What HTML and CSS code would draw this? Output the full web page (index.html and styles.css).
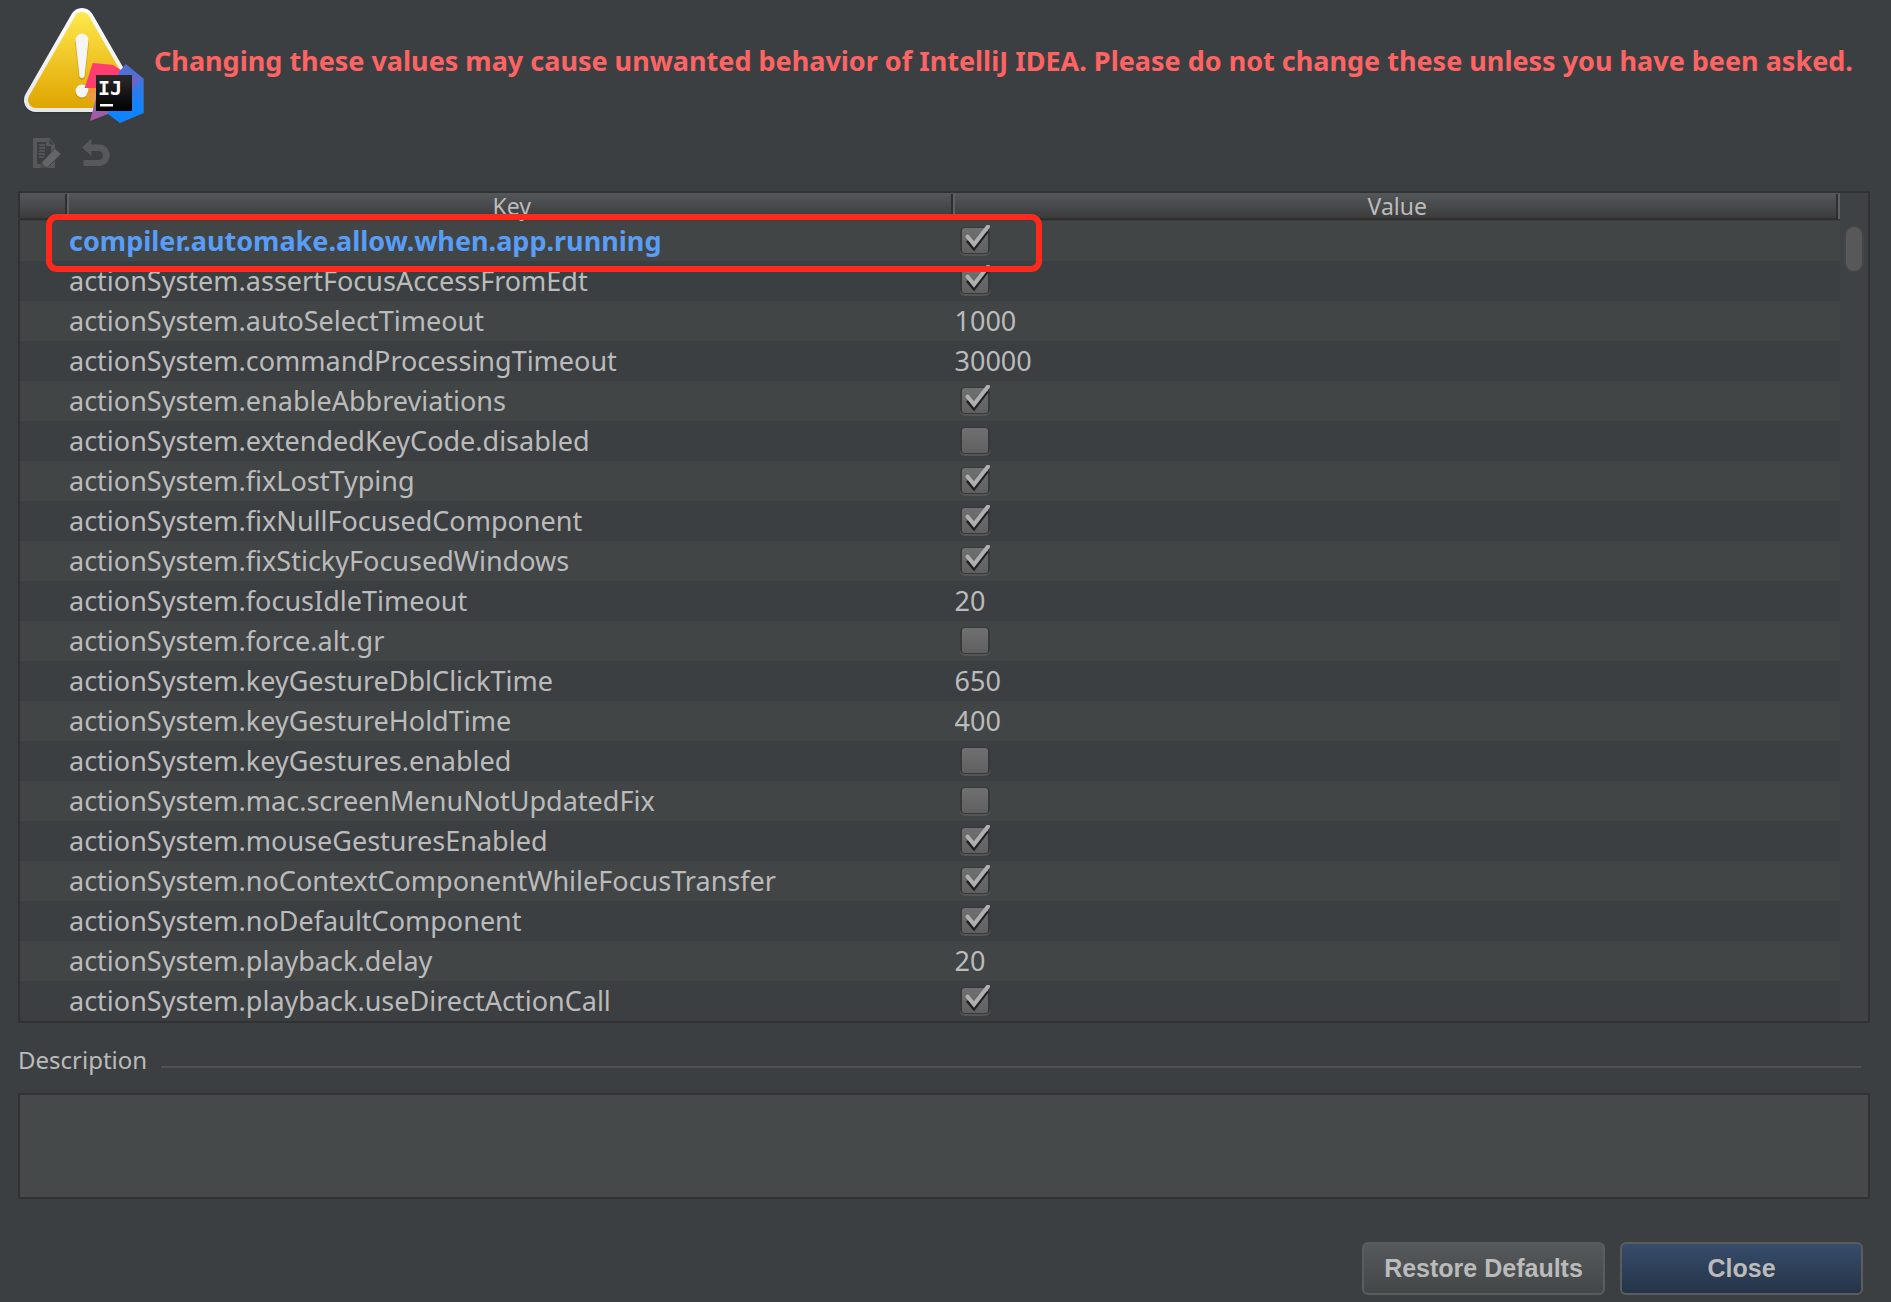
FILE: index.html
```html
<!DOCTYPE html>
<html lang="en">
<head>
<meta charset="utf-8">
<meta name="viewport" content="width=device-width, initial-scale=1">
<title>Registry</title>
<link rel="stylesheet" href="styles.css">
</head>
<body>
<main class="dialog">
  <header class="warning">
    <svg class="warning-icon" viewBox="22 0 124 122" aria-hidden="true">
      <defs>
        <linearGradient id="yellow" gradientUnits="userSpaceOnUse" x1="0" y1="12" x2="0" y2="108"><stop offset="0" stop-color="#ffe84c"/><stop offset="1" stop-color="#dfa400"/></linearGradient>
        <linearGradient id="white" gradientUnits="userSpaceOnUse" x1="0" y1="8" x2="0" y2="112"><stop offset="0" stop-color="#ffffff"/><stop offset="1" stop-color="#e6e6e6"/></linearGradient>
        <linearGradient id="blue" x1="0" y1="0" x2="0" y2="1"><stop offset="0" stop-color="#5b6bd0"/><stop offset=".7" stop-color="#1483fa"/><stop offset="1" stop-color="#0b84ff"/></linearGradient>
        <linearGradient id="purple" x1="1" y1="0" x2="0" y2="1"><stop offset="0" stop-color="#7a6cc4"/><stop offset="1" stop-color="#b0559f"/></linearGradient>
        <linearGradient id="orange" x1="0" y1="0" x2="0" y2="1"><stop offset="0" stop-color="#f9902c"/><stop offset="1" stop-color="#e8a05a"/></linearGradient>
        <linearGradient id="black" x1="0" y1="0" x2="0" y2="1"><stop offset="0" stop-color="#2b2b2b"/><stop offset="1" stop-color="#000000"/></linearGradient>
      </defs>
      <path d="M82 21 36 101H128Z" fill="#2d2f30" stroke="#2d2f30" stroke-width="25" stroke-linejoin="round" opacity=".6"/>
      <path d="M82 20 36 100H128Z" fill="url(#white)" stroke="url(#white)" stroke-width="24" stroke-linejoin="round"/>
      <path d="M82 20 36 100H128Z" fill="url(#yellow)" stroke="url(#yellow)" stroke-width="16" stroke-linejoin="round"/>
      <g fill="#c08a00" opacity=".6"><path d="M75 42a7 7 0 0 1 14 0L85 78q-3 4-6 0Z"/><circle cx="82" cy="92" r="7"/></g>
      <g fill="#f5f5f5"><path d="M75.500 40a6.500 6.500 0 0 1 13 0L84.500 76.500q-2.500 3-5 0Z"/><circle cx="82" cy="91" r="6.500"/></g>
      <path d="M86 96 90 87h8v18Z" fill="url(#orange)"/>
      <path d="M96 98 90 121 108 114 114 104Z" fill="url(#purple)"/>
      <path d="M92.700 63 113 65 124 72V88H84.700Z" fill="#ff3d6e"/>
      <path d="M125.700 64 143.700 78.700V113L120 123 108 114 119 72Z" fill="url(#blue)"/>
      <path d="M131 92 141 78 131 74Z" fill="#6a66c8"/>
      <path d="M96 75h36v36H96Z" fill="url(#black)"/>
      <text class="logo-text" x="98" y="95">IJ</text>
      <path d="M100 104h13v2.500h-13Z" fill="#fff"/>
    </svg>
    <h1 class="warning-text">Changing these values may cause unwanted behavior of IntelliJ IDEA. Please do not change these unless you have been asked.</h1>
  </header>

  <div class="toolbar">
    <button class="tool" type="button" aria-label="Edit value" disabled>
      <svg viewBox="0 0 30 32" aria-hidden="true">
        <path d="M1 1H17L23 8V31H1ZM5 5V27H19V9H14V5Z" fill="#575859" fill-rule="evenodd"/>
        <path d="M7 8h6M7 11h6M7 14h6M7 17h6M7 20h5" stroke="#5b5c5d" stroke-width="1.300"/>
        <path d="M17 1 23 8H17Z" fill="#3c3f41" stroke="#575859"/>
        <path d="M23 11.500 29 17 16 30 9 31 10 25Z" fill="#646566" stroke="#444648"/>
        <path d="M10 26l4 4-5 1Z" fill="#4b4c4d"/>
      </svg>
    </button>
    <button class="tool" type="button" aria-label="Revert to default" disabled>
      <svg viewBox="0 0 30 32" aria-hidden="true">
        <path d="M0 10.500 9.500 1.500V7.500H17a10.500 10.500 0 0 1 0 21.500H1.500V23H16.500a4.500 4.500 0 0 0 0-9H9.500V19Z" fill="#575859"/>
      </svg>
    </button>
  </div>

  <section class="panel" aria-label="Registry keys">
    <table class="registry">
      <colgroup><col class="col-mark"><col><col></colgroup>
      <thead>
        <tr><th scope="col"></th><th scope="col">Key</th><th scope="col">Value</th></tr>
      </thead>
      <tbody>
        <tr class="changed"><td></td><td><label for="k1">compiler.automake.allow.when.app.running</label></td><td><input class="check" id="k1" type="checkbox" checked></td></tr>
        <tr><td></td><td><label for="k2">actionSystem.assertFocusAccessFromEdt</label></td><td><input class="check" id="k2" type="checkbox" checked></td></tr>
        <tr><td></td><td>actionSystem.autoSelectTimeout</td><td>1000</td></tr>
        <tr><td></td><td>actionSystem.commandProcessingTimeout</td><td>30000</td></tr>
        <tr><td></td><td><label for="k5">actionSystem.enableAbbreviations</label></td><td><input class="check" id="k5" type="checkbox" checked></td></tr>
        <tr><td></td><td><label for="k6">actionSystem.extendedKeyCode.disabled</label></td><td><input class="check" id="k6" type="checkbox"></td></tr>
        <tr><td></td><td><label for="k7">actionSystem.fixLostTyping</label></td><td><input class="check" id="k7" type="checkbox" checked></td></tr>
        <tr><td></td><td><label for="k8">actionSystem.fixNullFocusedComponent</label></td><td><input class="check" id="k8" type="checkbox" checked></td></tr>
        <tr><td></td><td><label for="k9">actionSystem.fixStickyFocusedWindows</label></td><td><input class="check" id="k9" type="checkbox" checked></td></tr>
        <tr><td></td><td>actionSystem.focusIdleTimeout</td><td>20</td></tr>
        <tr><td></td><td><label for="k11">actionSystem.force.alt.gr</label></td><td><input class="check" id="k11" type="checkbox"></td></tr>
        <tr><td></td><td>actionSystem.keyGestureDblClickTime</td><td>650</td></tr>
        <tr><td></td><td>actionSystem.keyGestureHoldTime</td><td>400</td></tr>
        <tr><td></td><td><label for="k14">actionSystem.keyGestures.enabled</label></td><td><input class="check" id="k14" type="checkbox"></td></tr>
        <tr><td></td><td><label for="k15">actionSystem.mac.screenMenuNotUpdatedFix</label></td><td><input class="check" id="k15" type="checkbox"></td></tr>
        <tr><td></td><td><label for="k16">actionSystem.mouseGesturesEnabled</label></td><td><input class="check" id="k16" type="checkbox" checked></td></tr>
        <tr><td></td><td><label for="k17">actionSystem.noContextComponentWhileFocusTransfer</label></td><td><input class="check" id="k17" type="checkbox" checked></td></tr>
        <tr><td></td><td><label for="k18">actionSystem.noDefaultComponent</label></td><td><input class="check" id="k18" type="checkbox" checked></td></tr>
        <tr><td></td><td>actionSystem.playback.delay</td><td>20</td></tr>
        <tr><td></td><td><label for="k20">actionSystem.playback.useDirectActionCall</label></td><td><input class="check" id="k20" type="checkbox" checked></td></tr>
      </tbody>
    </table>
    <div class="scroll-track"><div class="scroll-thumb"></div></div>
    <div class="highlight"></div>
  </section>

  <div class="section-title">
    <label for="description">Description</label>
    <span class="rule"></span>
  </div>
  <textarea class="description" id="description" readonly></textarea>

  <footer class="actions">
    <button class="button" type="button">Restore Defaults</button>
    <button class="button button-primary" type="button">Close</button>
  </footer>
</main>
</body>
</html>
```
FILE: styles.css
```css
* {
  box-sizing: border-box;
}

body {
  margin: 0;
  background: #3c3f41;
  color: #bbbbbb;
  font-family: "Noto Sans", "Open Sans", sans-serif;
  font-size: 27px;
  line-height: 40px;
}

.dialog {
  display: flex;
  flex-direction: column;
  padding: 0 21px 0 18px;
}

.warning {
  display: flex;
  align-items: center;
  gap: 8px;
  padding-left: 4px;
}

.warning-icon {
  flex: none;
  width: 124px;
  height: 122px;
  overflow: visible;
}

.logo-text {
  fill: #ffffff;
  font: bold 20px "DejaVu Sans Mono", monospace;
}

.warning-text {
  margin: 0;
  color: #ff6464;
  font-size: 27px;
  font-weight: 700;
}

.toolbar {
  display: flex;
  gap: 20px;
  margin: 15px 0 22px;
  padding-left: 14px;
}

.tool {
  width: 30px;
  height: 32px;
  padding: 0;
  border: 0;
  background: none;
}

.tool svg {
  display: block;
  width: 30px;
  height: 32px;
}

.panel {
  position: relative;
  display: flex;
  border: 2px solid #323232;
}

.registry {
  flex: 1;
  width: 0;
  table-layout: fixed;
  border-collapse: collapse;
}

.col-mark {
  width: 49px;
}

.registry th {
  height: 28px;
  padding: 0 0 2px;
  background:
    linear-gradient(#2d2e2f, #2d2e2f) right 2px top 1px / 2px 25px no-repeat,
    linear-gradient(#5e6162, #5e6162) right 0 top 1px / 2px 25px no-repeat,
    linear-gradient(#53585a 0, #3c3b3c 25px, #2f2f2f 25px, #2f2f2f 27px, #3c3d3e 27px);
  font-size: 23px;
  font-weight: 400;
  line-height: 26px;
}

.registry td {
  height: 40px;
  padding: 0;
  white-space: nowrap;
}

.registry tbody tr:nth-child(odd) {
  background: #414546;
}

.changed {
  color: #589df6;
  font-weight: 700;
}

.check {
  display: block;
  width: 32px;
  height: 32px;
  margin: 0 0 0 5px;
  appearance: none;
  background: url("data:image/svg+xml,%3Csvg xmlns='http://www.w3.org/2000/svg' viewBox='0 0 32 32'%3E%3Cdefs%3E%3ClinearGradient id='g' x2='0' y2='1'%3E%3Cstop stop-color='%23707070'/%3E%3Cstop offset='1' stop-color='%23606060'/%3E%3C/linearGradient%3E%3C/defs%3E%3Crect x='0' y='5' width='30' height='26' rx='5' fill='%23535556'/%3E%3Crect x='0' y='2' width='30' height='27' rx='5' fill='%23373839'/%3E%3Crect x='2' y='3' width='26' height='25' rx='3' fill='url(%23g)'/%3E%3C/svg%3E") no-repeat;
}

.check:checked {
  background-image: url("data:image/svg+xml,%3Csvg xmlns='http://www.w3.org/2000/svg' viewBox='0 0 32 32'%3E%3Cdefs%3E%3ClinearGradient id='g' x2='0' y2='1'%3E%3Cstop stop-color='%23707070'/%3E%3Cstop offset='1' stop-color='%23606060'/%3E%3C/linearGradient%3E%3C/defs%3E%3Crect x='0' y='5' width='30' height='26' rx='5' fill='%23535556'/%3E%3Crect x='0' y='2' width='30' height='27' rx='5' fill='%23373839'/%3E%3Crect x='2' y='3' width='26' height='25' rx='3' fill='url(%23g)'/%3E%3Cg fill='none' stroke-width='4'%3E%3Cpath d='M7.500 15.500 14 23 27 6' stroke='%231e1e1e'/%3E%3Cpath d='M7.500 11.500 14 19.500 28 1.500' stroke='%23b0b0b0' stroke-linecap='round'/%3E%3C/g%3E%3C/svg%3E");
}

.scroll-track {
  width: 28px;
  padding: 34px 6px 0;
  background: #3f4244;
}

.scroll-thumb {
  height: 44px;
  border-radius: 8px;
  background: #585859;
  box-shadow: 0 0 0 2px #434546;
}

.highlight {
  position: absolute;
  top: 21px;
  left: 26px;
  width: calc(50% + 72px);
  height: 58px;
  border: 6px solid #ff2a1c;
  border-radius: 11px;
  pointer-events: none;
}

.section-title {
  display: flex;
  align-items: flex-end;
  gap: 14px;
  margin: 21px 9px 17px 0;
  font-size: 24px;
  line-height: 32px;
}

.rule {
  flex: 1;
  height: 2px;
  margin-bottom: 8px;
  background: #515151;
}

.description {
  display: block;
  width: 100%;
  height: 106px;
  border: 2px solid #323232;
  background: #45494a;
  color: inherit;
  font: inherit;
  resize: none;
}

.actions {
  display: flex;
  justify-content: flex-end;
  gap: 15px;
  margin-top: 43px;
  padding: 0 7px 7px 0;
}

.button {
  width: 243px;
  height: 53px;
  padding: 0;
  border: 2px solid #5a5d5e;
  border-radius: 6px;
  background: linear-gradient(#55595b, #434748);
  color: #bbbbbb;
  font-family: "Liberation Sans", Arial, sans-serif;
  font-size: 25px;
  font-weight: 700;
}

.button-primary {
  background: linear-gradient(#374c6b, #253448);
}
```
